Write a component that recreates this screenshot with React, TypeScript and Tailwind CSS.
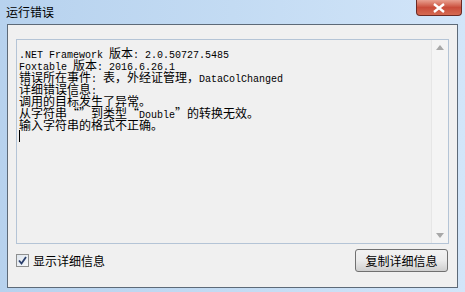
const lines = [
  ".NET Framework 版本: 2.0.50727.5485",
  "Foxtable 版本: 2016.6.26.1",
  "错误所在事件: 表，外经证管理，DataColChanged",
  "详细错误信息:",
  "调用的目标发生了异常。",
  "从字符串“”到类型“Double”的转换无效。",
  "输入字符串的格式不正确。",
];

// ascii runs get the narrow mono face, cjk runs stay at 12px
const Line = ({ text }: { text: string }) => {
  const parts = text.match(/[\x20-\x7e]+|[^\x20-\x7e]+/g) ?? [];
  return (
    <div className="h-[12px] leading-[12px] whitespace-pre">
      {parts.map((p, i) =>
        /^[\x20-\x7e]+$/.test(p) ? (
          <span key={i} className="text-[10px] font-['Liberation_Mono',monospace]">
            {p}
          </span>
        ) : (
          <span key={i} className="text-[12px] font-['Noto_Sans_CJK_SC',sans-serif]">
            {p}
          </span>
        )
      )}
    </div>
  );
};

export default function App() {
  return (
    <div className="w-[465px] h-[292px] overflow-hidden flex flex-col bg-gradient-to-r from-[#b7d2ee] via-[#c3dbf3] to-[#d2e5f9] font-['Noto_Sans_CJK_SC',sans-serif]">
      <div className="h-[24px] shrink-0 flex items-start justify-between pl-[6px] pr-[3px]">
        <span className="text-[12px] leading-[12px] mt-[6px] text-black">运行错误</span>
        <div className="w-[46px] h-[16px] rounded-b-[4px] border border-t-0 border-[#6b2a24] bg-gradient-to-b from-[#e8a090] via-[#c94c3a] to-[#d56a52] flex items-center justify-center">
          <svg width="12" height="10" viewBox="0 0 12 10">
            <path d="M1 1 L11 9 M11 1 L1 9" stroke="#ffffff" strokeWidth="2.4" />
          </svg>
        </div>
      </div>
      <div className="flex-1 mx-[7px] mb-[4px] border border-[#5d6a78] bg-[#f0f0f0] flex flex-col px-[8px] pt-[14px] pb-[10px]">
        <div className="h-[205px] border border-[#b4c4d6] bg-[#f0f0f0] flex">
          <div className="flex-1 pl-[2px] pt-[5px] text-black">
            {lines.map((l) => (
              <Line key={l} text={l} />
            ))}
            <div className="h-[12px] w-px bg-black mt-[1px]" />
          </div>
          <div className="w-[17px] border-l border-[#e6e6e6] bg-[#f4f4f4] flex flex-col justify-between items-center py-[5px]">
            <svg width="8" height="5" viewBox="0 0 8 5">
              <path d="M0 5 L4 0 L8 5 Z" fill="#a8a8a8" />
            </svg>
            <svg width="8" height="5" viewBox="0 0 8 5">
              <path d="M0 0 L8 0 L4 5 Z" fill="#a8a8a8" />
            </svg>
          </div>
        </div>
        <div className="flex-1 flex items-center justify-between">
          <label className="flex items-center gap-[4px] text-[12px] text-black">
            <span className="w-[13px] h-[13px] border border-[#8e8f8f] bg-gradient-to-br from-[#dfe6ee] to-[#f6f8fa] flex items-center justify-center">
              <svg width="9" height="9" viewBox="0 0 9 9">
                <path d="M1 4.5 L3.5 7.5 L8 1" stroke="#2a3f6c" strokeWidth="1.8" fill="none" />
              </svg>
            </span>
            显示详细信息
          </label>
          <button className="w-[93px] h-[23px] mr-[1px] rounded-[3px] border border-[#707070] bg-gradient-to-b from-[#f2f2f2] via-[#ebebeb] to-[#cfcfcf] text-[12px] text-black">
            复制详细信息
          </button>
        </div>
      </div>
    </div>
  );
}
